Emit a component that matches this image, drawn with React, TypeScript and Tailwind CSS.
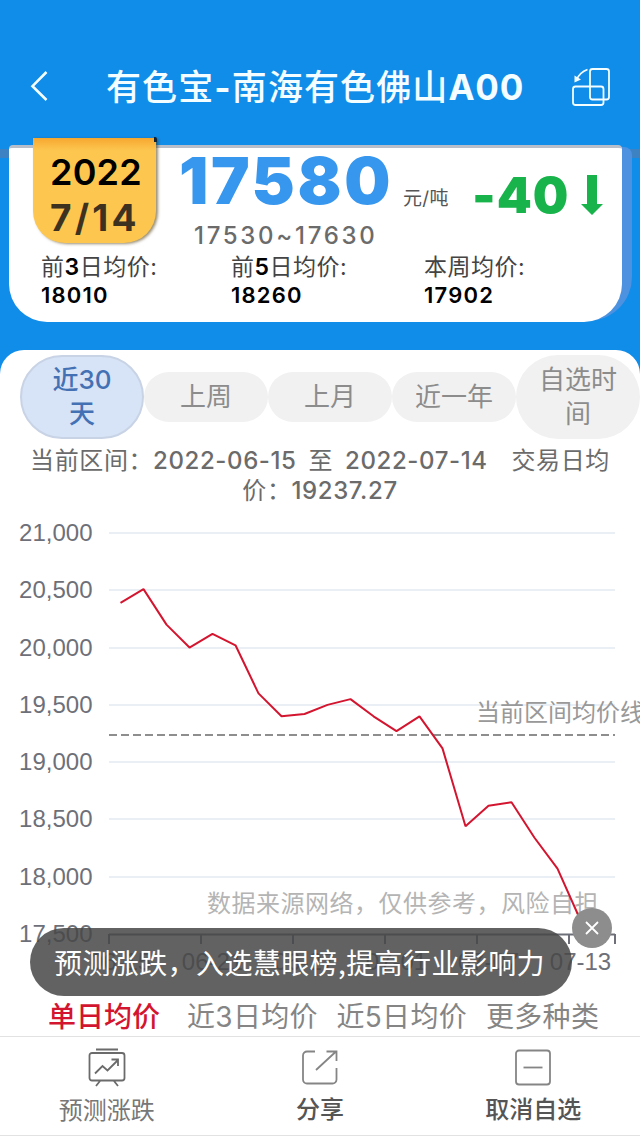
import type { ReactNode } from "react";

const AVERAGES = [
  { label: "前3日均价:", value: "18010", width: "w-[190px]" },
  { label: "前5日均价:", value: "18260", width: "w-[193px]" },
  { label: "本周均价:", value: "17902", width: "w-[140px]" },
];

const RANGES = ["近30天", "上周", "上月", "近一年", "自选时间"];

const PRICE_TABS = ["单日均价", "近3日均价", "近5日均价", "更多种类"];

const PRICES = [
  20390, 20510, 20200, 20000, 20120, 20020, 19600, 19400, 19420, 19500, 19550, 19400, 19270, 19400, 19120, 18440,
  18620, 18650, 18340, 18070, 17620, 17580,
];

const Y_TICKS = [21000, 20500, 20000, 19500, 19000, 18500, 18000, 17500];

const X_LABELS = [
  { index: 0, text: "06-15" },
  { index: 4, text: "06-21" },
  { index: 8, text: "06-27" },
  { index: 12, text: "07-01" },
  { index: 16, text: "07-07" },
  { index: 20, text: "07-13" },
];

const AVERAGE_PRICE = 19237.27;
const LEFT = 109;
const RIGHT = 615;
const TOP = 23;
const BOTTOM = 424;
const STEP = (RIGHT - LEFT) / PRICES.length;

function yOf(price: number) {
  return TOP + ((21000 - price) / 3500) * (BOTTOM - TOP);
}

function xOf(index: number) {
  return LEFT + STEP * (index + 0.5);
}

export default function App() {
  return (
    <div className="relative flex h-[1136px] w-[640px] flex-col overflow-hidden bg-[#108ce9] font-['Inter','Noto_Sans_CJK_SC',sans-serif]">
      <Header />
      <PriceCard />
      <main className="mt-[28px] flex h-[686px] flex-col overflow-hidden rounded-t-[24px] bg-white">
        <RangeTabs />
        <div className="mt-[5px] flex h-[60px] shrink-0 flex-col text-center text-[24px] leading-[30px] font-medium text-[#6b6b6b]">
          <p className="h-[30px] tracking-[0.6px] whitespace-pre">
            <Cjk>当前区间：</Cjk>
            <span className="tracking-[0.6px]">2022-06-15</span>
            <Cjk>{"  至  "}</Cjk>
            <span className="tracking-[0.6px]">2022-07-14</span>
            <Cjk>{"    交易日均"}</Cjk>
          </p>
          <p className="h-[30px] tracking-[0.6px]">
            <Cjk>价：</Cjk>19237.27
          </p>
        </div>
        <PriceChart />
        <div className="flex h-[42px] shrink-0 items-center pl-[48px] text-[28px] font-normal whitespace-nowrap text-[#858585]">
          {PRICE_TABS.map((tab, i) => (
            <span
              key={tab}
              className={
                i === 0
                  ? "w-[139px] font-medium text-[#d3152f]"
                  : i === 3
                    ? "w-[120px] tracking-[0.3px]"
                    : "w-[149.5px] tracking-[0.3px]"
              }
            >
              {tab}
            </span>
          ))}
        </div>
      </main>
      <BottomBar />
      <Toast />
    </div>
  );
}

function Cjk({ children }: { children: ReactNode }) {
  return <span className="font-['Noto_Sans_CJK_SC',sans-serif] font-normal">{children}</span>;
}

function Header() {
  return (
    <header className="flex h-[145px] items-start pt-[60px] text-[#f4fdff]">
      <svg className="ml-[30px] h-[54px] w-[20px]" viewBox="0 0 20 54" fill="none" stroke="currentColor" strokeWidth="2.6">
        <path d="M16.5 12 2.5 26.2 16.5 40" />
      </svg>
      <h1 className="ml-[56px] w-[420px] text-[35px] leading-[54px] font-medium tracking-[1.1px] whitespace-nowrap">
        有色宝<span className="font-bold">-</span>南海有色佛山
        <span className="font-bold tracking-[0.8px]">A00</span>
      </h1>
      <svg className="ml-[44px] h-[54px] w-[42px]" viewBox="570 60 42 54" fill="none" stroke="currentColor" strokeWidth="1.8">
        <rect x="590" y="69" width="19" height="30.5" rx="2.5" />
        <rect x="573" y="86.5" width="30.5" height="18.5" rx="2.5" />
        <path d="M587.5 69.5C582 71.5 578.5 75 576.5 80" />
        <path d="M574.5 75.5v7l6.5-3z" fill="currentColor" stroke="none" />
      </svg>
    </header>
  );
}

function PriceCard() {
  return (
    <section className="relative h-[177px]">
      <div className="absolute top-[4px] left-0 h-[9px] w-full bg-[#3d83c4]" />
      <div className="absolute top-[2px] right-[8px] h-[174px] w-[80px] rounded-tr-[8px] rounded-br-[44px] bg-[#4d92e0]" />
      <div className="relative ml-[9px] h-[177px] w-[613px] rounded-t-[4px] rounded-b-[38px] border-t-[3px] border-[#b9bfca] bg-white">
        <div className="flex h-[105px] pl-[170px]">
          <div className="w-[218px]">
            <div className="h-[66px] text-[65px] leading-[66px] font-black tracking-[2.6px] text-[#3796ee]">17580</div>
            <div className="mt-[8px] ml-[15px] text-[24px] leading-[28px] font-medium tracking-[2.7px] text-[#6b6b6b]">
              17530~17630
            </div>
          </div>
          <span className="mt-[37px] ml-[6px] w-[69px] text-[19px] leading-[28px] tracking-[0.3px] text-[#555]">元/吨</span>
          <span className="mt-[22px] w-[99px] text-[50px] leading-[50px] font-black tracking-[0.9px] text-[#18b34b]">-40</span>
          <svg className="mt-[25px] ml-[10px] h-[46px] w-[22px]" viewBox="0 0 22 46">
            <path d="M6 2h10v29h6L11 42 0 31h6z" fill="#18b34b" />
          </svg>
        </div>
        <div className="flex pl-[32px] text-[22px] leading-[28px] whitespace-nowrap">
          {AVERAGES.map((item) => (
            <div key={item.label} className={item.width}>
              <p className="h-[28px] text-[23px] tracking-[0.5px] text-[#444]">
                {item.label.split(/(\d)/).map((part, i) => (
                  <span key={i} className={/\d/.test(part) ? "font-semibold text-black" : ""}>
                    {part}
                  </span>
                ))}
              </p>
              <p className="h-[28px] font-semibold tracking-[1.2px] text-black">{item.value}</p>
            </div>
          ))}
        </div>
      </div>
      <div className="absolute -top-[7px] left-[33px] flex h-[105px] w-[123px] flex-col rounded-b-[32px] bg-[#fdc64f] bg-linear-to-b from-[#f6a82f] to-[#fdc64f] to-[12%] pt-[14px] pl-[17px] shadow-[2px_1px_3px_rgba(70,50,0,0.55)]">
        <span className="h-[44px] text-[36px] leading-[40px] font-semibold tracking-[0.2px] text-black">2022</span>
        <span className="text-[37px] leading-[52px] font-bold tracking-[3.2px] text-[#3d3220]">7/14</span>
      </div>
      <div className="absolute -top-[8px] left-[154px] h-[5px] w-[3px] rounded-tr-[2px] bg-[#123]" />
    </section>
  );
}

function RangeTabs() {
  return (
    <div className="mt-[5px] ml-[20px] flex h-[84px] shrink-0 items-center">
      {RANGES.map((range, i) => (
        <button
          key={range}
          type="button"
          className={`w-[124px] shrink-0 rounded-[42px] px-[20px] text-[26px] leading-[34px] ${
            i === 0
              ? "h-[84px] border-2 border-[#c8d3e6] bg-[#d7e3f6] font-medium text-[#4471b4]"
              : i === 4
                ? "h-[84px] bg-[#f1f1f1] text-[#8c8c8c]"
                : "h-[50px] bg-[#f1f1f1] text-[#8c8c8c]"
          }`}
        >
          {range}
        </button>
      ))}
    </div>
  );
}

function PriceChart() {
  return (
    <svg
      className="mt-[6px] h-[486px] w-[640px] shrink-0 font-['Liberation_Sans','Noto_Sans_CJK_SC',sans-serif] text-[24px]"
      viewBox="0 0 640 486"
    >
      {Y_TICKS.map((tick) => (
        <g key={tick}>
          {tick > 17500 && (
            <path d={`M${LEFT} ${Math.round(yOf(tick))}H${RIGHT}`} stroke="#eaeff5" strokeWidth="2" />
          )}
          <text x="92.5" y={yOf(tick) + 8} textAnchor="end" fill="#6e7079">
            {tick.toLocaleString("en-US")}
          </text>
        </g>
      ))}
      <path d={`M${LEFT} ${BOTTOM + 0.5}H${RIGHT}`} stroke="#6e7079" strokeWidth="2" />
      {[0, 4, 8, 12, 16, 20, 22].map((i) => (
        <path key={i} d={`M${LEFT + STEP * i} ${BOTTOM}v10`} stroke="#6e7079" strokeWidth="2" />
      ))}
      {X_LABELS.map((label) => (
        <text key={label.text} x={xOf(label.index)} y="460" textAnchor="middle" fill="#6e7079">
          {label.text}
        </text>
      ))}
      <text x="207" y="402" fill="#b4b4b4" className="tracking-[0.5px]">
        数据来源网络，仅供参考，风险自担
      </text>
      <path
        d={`M${LEFT} ${yOf(AVERAGE_PRICE)}H${RIGHT}`}
        stroke="#8e8e8e"
        strokeWidth="2"
        strokeDasharray="8 4"
      />
      <text x="476" y="211" fill="#999">
        当前区间均价线
      </text>
      <polyline
        points={PRICES.map((price, i) => `${xOf(i)},${yOf(price)}`).join(" ")}
        fill="none"
        stroke="#d3152f"
        strokeWidth="2"
        strokeLinejoin="bevel"
      />
    </svg>
  );
}

function BottomBar() {
  return (
    <nav className="flex h-[100px] border-y border-[#e2e2e2] bg-white text-[24px] leading-[32px]">
      <NavItem label="预测涨跌">
        <path d="M9 1.500h22M5 5h30a2.500 2.500 0 0 1 2.500 2.500v22.500a2.500 2.500 0 0 1-2.500 2.500h-30a2.500 2.500 0 0 1-2.500-2.500v-22.500a2.500 2.500 0 0 1 2.500-2.500zM13 33 9 38M27 33l4 5M8 25.500l7.500-7.500 5 4.500 10-10M24.500 11.500h6.500v6.500" />
      </NavItem>
      <NavItem label="分享" dark>
        <path d="M15 3.500H7a4 4 0 0 0-4 4v24a4 4 0 0 0 4 4h25.500a4 4 0 0 0 4-4V20M16 22 36 3.500M26.500 3.500H36.500v9.500" />
      </NavItem>
      <NavItem label="取消自选" dark>
        <rect x="3" y="2.5" width="34" height="34" rx="3" />
        <path d="M10.500 19.500h19" />
      </NavItem>
    </nav>
  );
}

function NavItem({ label, dark, children }: { label: string; dark?: boolean; children: ReactNode }) {
  return (
    <div className="flex flex-1 flex-col items-center pt-[11px]">
      <svg className="size-[40px]" viewBox="0 0 40 40" fill="none" stroke={dark ? "#858585" : "#6b6b6b"} strokeWidth="1.8">
        {children}
      </svg>
      <span className={dark ? "mt-[6px] font-medium text-[#555]" : "mt-[7px] text-[#777]"}>{label}</span>
    </div>
  );
}

function Toast() {
  return (
    <div className="absolute top-[928px] left-[30px] h-[68px] w-[542px] rounded-full bg-[#464646]/85 pl-[24px] text-[28px] leading-[68px] whitespace-nowrap text-white">
      <span className="font-['Noto_Sans_CJK_SC',sans-serif] tracking-[0.4px]">预测涨跌，入选慧眼榜,提高行业影响力</span>
      <button
        type="button"
        aria-label="关闭"
        className="absolute -top-[20px] -right-[40px] flex size-[40px] items-center justify-center rounded-full bg-[#8d8d8d]"
      >
        <svg className="size-[14px]" viewBox="0 0 14 14" stroke="white" strokeWidth="1.8">
          <path d="M1 1l12 12M13 1 1 13" />
        </svg>
      </button>
    </div>
  );
}
